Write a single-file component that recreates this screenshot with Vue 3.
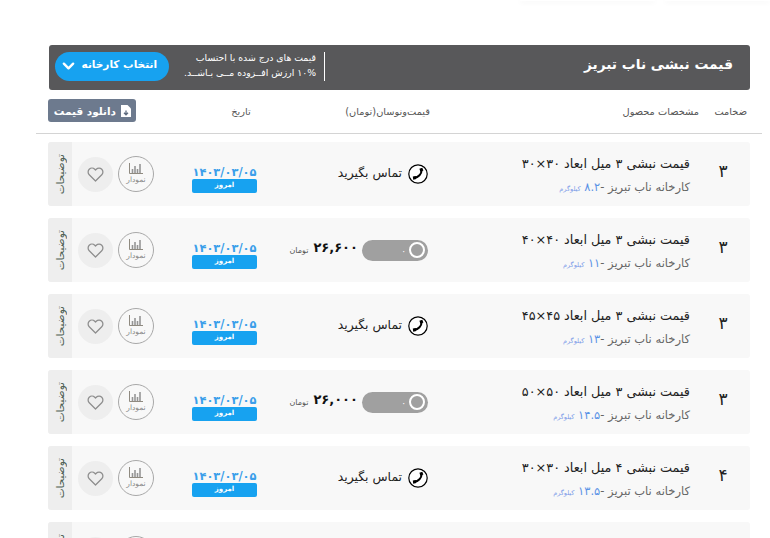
<template>
  <div class="page" dir="rtl">
    <div class="top-strip">
      <span class="top-card first"></span>
      <span class="top-card second"></span>
    </div>

    <div class="title-bar">
      <h1 class="title">قیمت نبشی ناب تبریز</h1>
      <div class="note">
        <p>قیمت های درج شده با احتساب</p>
        <p>۱۰% ارزش افــزوده مــی بـاشــد.</p>
      </div>
      <button class="factory-btn">
        <span class="btn-label">انتخاب کارخانه</span>
        <svg class="chevron" viewBox="0 0 14 10"><path d="M2 2.500l5 5 5-5" fill="none" stroke="#fff" stroke-width="2.600" stroke-linecap="round" stroke-linejoin="round"/></svg>
      </button>
    </div>

    <div class="col-heads">
      <span>ضخامت</span>
      <span>مشخصات محصول</span>
      <span>قیمت‌ونوسان(تومان)</span>
      <span class="date-head">تاریخ</span>
      <span></span>
      <button class="download-btn">
        <svg class="file-icon" viewBox="0 0 10 12"><path d="M0 0h6.500L10 3.500V12H0z" fill="#fff"/><path d="M5 5.500v4M3 7.800l2 2 2-2" fill="none" stroke="#5d6a7e" stroke-width="1.300"/></svg>
        <span>دانلود قیمت</span>
      </button>
    </div>

    <div v-for="(row, i) in rows" :key="i" class="row">
      <template v-if="row.title">
        <div class="thick">{{ row.thick }}</div>
        <div class="product">
          <div class="product-title">{{ row.title }}</div>
          <div class="product-sub">کارخانه ناب تبریز -<span class="weight">{{ row.weight }}</span> <span class="kg">کیلوگرم</span></div>
        </div>
        <div class="price">
          <template v-if="row.price">
            <span class="switch"><i class="knob"></i><b class="zero">۰</b></span>
            <span class="amount">{{ row.price }}</span>
            <span class="toman">تومان</span>
          </template>
          <template v-else>
            <svg class="phone" viewBox="0 0 20 20">
              <circle cx="10" cy="10" r="9.200" fill="#fff" stroke="#000" stroke-width="1.200"/>
              <path d="M13.600 6.200C13.500 10 10.500 13.200 6.400 13.700" fill="none" stroke="#000" stroke-width="2"/>
              <path d="M11.400 4.700l2.900-1 1.100 2.900-3 1.200zM4.800 12.400l3-.3.600 3-3.200.6z" fill="#000"/>
            </svg>
            <span class="call">تماس بگیرید</span>
          </template>
        </div>
        <div class="date">
          <div class="date-text">۱۴۰۳/۰۳/۰۵</div>
          <div class="today">امروز</div>
        </div>
      </template>
      <div class="chart">
        <svg class="chart-icon" viewBox="0 0 14 11"><path d="M.5 0v10.500H14" fill="none" stroke="#8f8a80" stroke-width="1"/><path d="M3.500 6v4M6 3v7M8.500 6v4M11 1v9" fill="none" stroke="#959595" stroke-width="1.600"/></svg>
        <span v-if="row.title">نمودار</span>
      </div>
      <div class="heart">
        <svg viewBox="0 0 24 24" fill="none" stroke="#8d8d8d" stroke-width="1.800" stroke-linejoin="round"><path d="M20.840 4.610a5.500 5.500 0 0 0-7.780 0L12 5.670l-1.060-1.060a5.500 5.500 0 0 0-7.780 7.780L12 21.230l8.840-8.840a5.500 5.500 0 0 0 0-7.780z"/></svg>
      </div>
      <div class="side-tab"><span>توضیحات</span></div>
    </div>
  </div>
</template>

<script setup>
const rows = [
  { thick: '۳', title: 'قیمت نبشی ۳ میل ابعاد ۳۰×۳۰', weight: '۸.۲', price: '' },
  { thick: '۳', title: 'قیمت نبشی ۳ میل ابعاد ۴۰×۴۰', weight: '۱۱', price: '۲۶,۶۰۰' },
  { thick: '۳', title: 'قیمت نبشی ۳ میل ابعاد ۴۵×۴۵', weight: '۱۳', price: '' },
  { thick: '۳', title: 'قیمت نبشی ۳ میل ابعاد ۵۰×۵۰', weight: '۱۴.۵', price: '۲۶,۰۰۰' },
  { thick: '۴', title: 'قیمت نبشی ۴ میل ابعاد ۳۰×۳۰', weight: '۱۳.۵', price: '' },
  { title: '' },
]
</script>

<style>
html, body { margin: 0; background: #fff; overflow: hidden; }
</style>

<style scoped>
.page {
  height: 538px;
  overflow: hidden;
  box-sizing: border-box;
  padding: 0 20px 0 48px;
  font-family: "DejaVu Sans", sans-serif;
  color: #333;
}
p { margin: 0; }

.top-strip {
  display: flex;
  gap: 10px;
  height: 1px;
  margin: 0 -20px 44px 0;
  align-items: flex-start;
}
.top-card {
  height: 1px;
  background: #fff;
  box-shadow: 0 1px 5px rgba(0, 0, 0, 0.1);
}
.top-card.first { width: 105px; }
.top-card.second { width: 135px; }

.title-bar {
  height: 45px;
  background: #58585a;
  border-radius: 3px;
  margin-left: 1px;
  display: flex;
  align-items: center;
  padding: 0 17px 0 6px;
  color: #fff;
}
.title {
  margin: 0 0 7px;
  font-size: 13.800px;
  font-weight: 700;
  width: 408px;
  flex: none;
}
.note {
  border-right: 1px solid #fff;
  padding-right: 8px;
  height: 29px;
  margin-top: -2px;
  font-size: 9.300px;
  line-height: 14.500px;
  white-space: nowrap;
  flex: 1;
}
.note p:first-child { margin-top: -1px; }
.factory-btn {
  width: 114px;
  height: 29px;
  border: none;
  border-radius: 15px;
  background: #17a2f0;
  color: #fff;
  font: 700 10.500px "DejaVu Sans", sans-serif;
  display: flex;
  align-items: center;
  justify-content: space-between;
  padding: 0 12px 0 7px;
  margin-top: -3px;
  white-space: nowrap;
}
.btn-label { margin-bottom: 4px; }
.chevron { width: 13px; height: 10px; margin-bottom: 1px; }

.col-heads {
  display: grid;
  grid-template-columns: 48px 269px 177px 24px 93px 88px;
  align-items: center;
  height: 44px;
  margin: 0 -12px 8px -12px;
  padding: 0 15px 0 12px;
  box-sizing: border-box;
  border-bottom: 1px solid #d4d4d4;
  font-size: 9.800px;
  color: #555;
}
.col-heads > span { white-space: nowrap; }
.date-head { justify-self: center; }
.download-btn {
  width: 88px;
  height: 23px;
  border: none;
  border-radius: 3px;
  background: #6d7a8e;
  color: #fff;
  font: 700 10.500px "DejaVu Sans", sans-serif;
  display: flex;
  align-items: center;
  gap: 5px;
  padding: 0 5px;
  margin-top: -2px;
  white-space: nowrap;
}
.file-icon { width: 10px; height: 12px; flex: none; }

.row {
  display: grid;
  grid-template-columns: 60px 262px 171px 65px 38px 36px 5px 35px 6px 24px;
  height: 64px;
  margin-bottom: 12px;
  background: #f8f8f8;
  border-radius: 3px;
  align-items: center;
  overflow: hidden;
}
.thick {
  text-align: center;
  font-size: 17px;
  color: #222;
  padding-left: 6px;
  margin-bottom: 6px;
}
.product { padding-top: 8px; }
.product-title { font-size: 12.800px; color: #222; line-height: 16px; white-space: nowrap; margin-top: -4px; }
.product-sub { font-size: 11.500px; color: #666; margin-top: 8px; line-height: 14px; white-space: nowrap; }
.weight { color: #5b93e6; }
.kg { font-size: 6.500px; color: #7f9de8; }

.price {
  display: flex;
  align-items: center;
  height: 100%;
}
.phone { width: 20px; height: 20px; margin-left: 6px; flex: none; }
.call { font-size: 12.400px; color: #222; white-space: nowrap; margin-bottom: 4px; }
.switch {
  position: relative;
  width: 66px;
  height: 21px;
  border-radius: 11px;
  background: #a0a0a0;
  margin: 0 0 0 4px;
  flex: none;
}
.knob {
  position: absolute;
  right: 3px;
  top: 2.500px;
  width: 12px;
  height: 12px;
  border: 2px solid #fff;
  border-radius: 50%;
}
.zero {
  position: absolute;
  right: 22px;
  top: 6px;
  color: #fff;
  font-size: 9px;
  font-weight: 400;
}
.amount { font-size: 13px; font-weight: 700; color: #111; margin: 0 0 6px 5px; white-space: nowrap; }
.toman { font-size: 8px; color: #555; white-space: nowrap; }

.date { text-align: center; margin-top: 10px; }
.date-text { font-size: 11.400px; font-weight: 700; color: #3b9fea; line-height: 13px; white-space: nowrap; }
.today {
  height: 14px;
  background: #17a2f0;
  border-radius: 2px;
  color: #fff;
  font-size: 7px;
  font-weight: 700;
  line-height: 12px;
}

.chart {
  grid-column: 6;
  width: 36px;
  height: 36px;
  box-sizing: border-box;
  border: 1px solid #a8a8a8;
  border-radius: 50%;
  display: flex;
  flex-direction: column;
  align-items: center;
  padding-top: 6px;
  gap: 1px;
  font-size: 7.500px;
  color: #888;
}
.chart-icon { width: 14px; height: 11px; flex: none; }
.heart {
  grid-column: 8;
  width: 35px;
  height: 35px;
  border-radius: 50%;
  background: #eee;
  display: flex;
  align-items: center;
  justify-content: center;
}
.heart svg { width: 17px; height: 17px; }
.side-tab {
  grid-column: 10;
  align-self: stretch;
  background: #eee;
  display: flex;
  align-items: center;
  justify-content: center;
}
.side-tab span {
  writing-mode: vertical-rl;
  transform: rotate(180deg);
  font-size: 10.500px;
  color: #4f5f55;
}
</style>
